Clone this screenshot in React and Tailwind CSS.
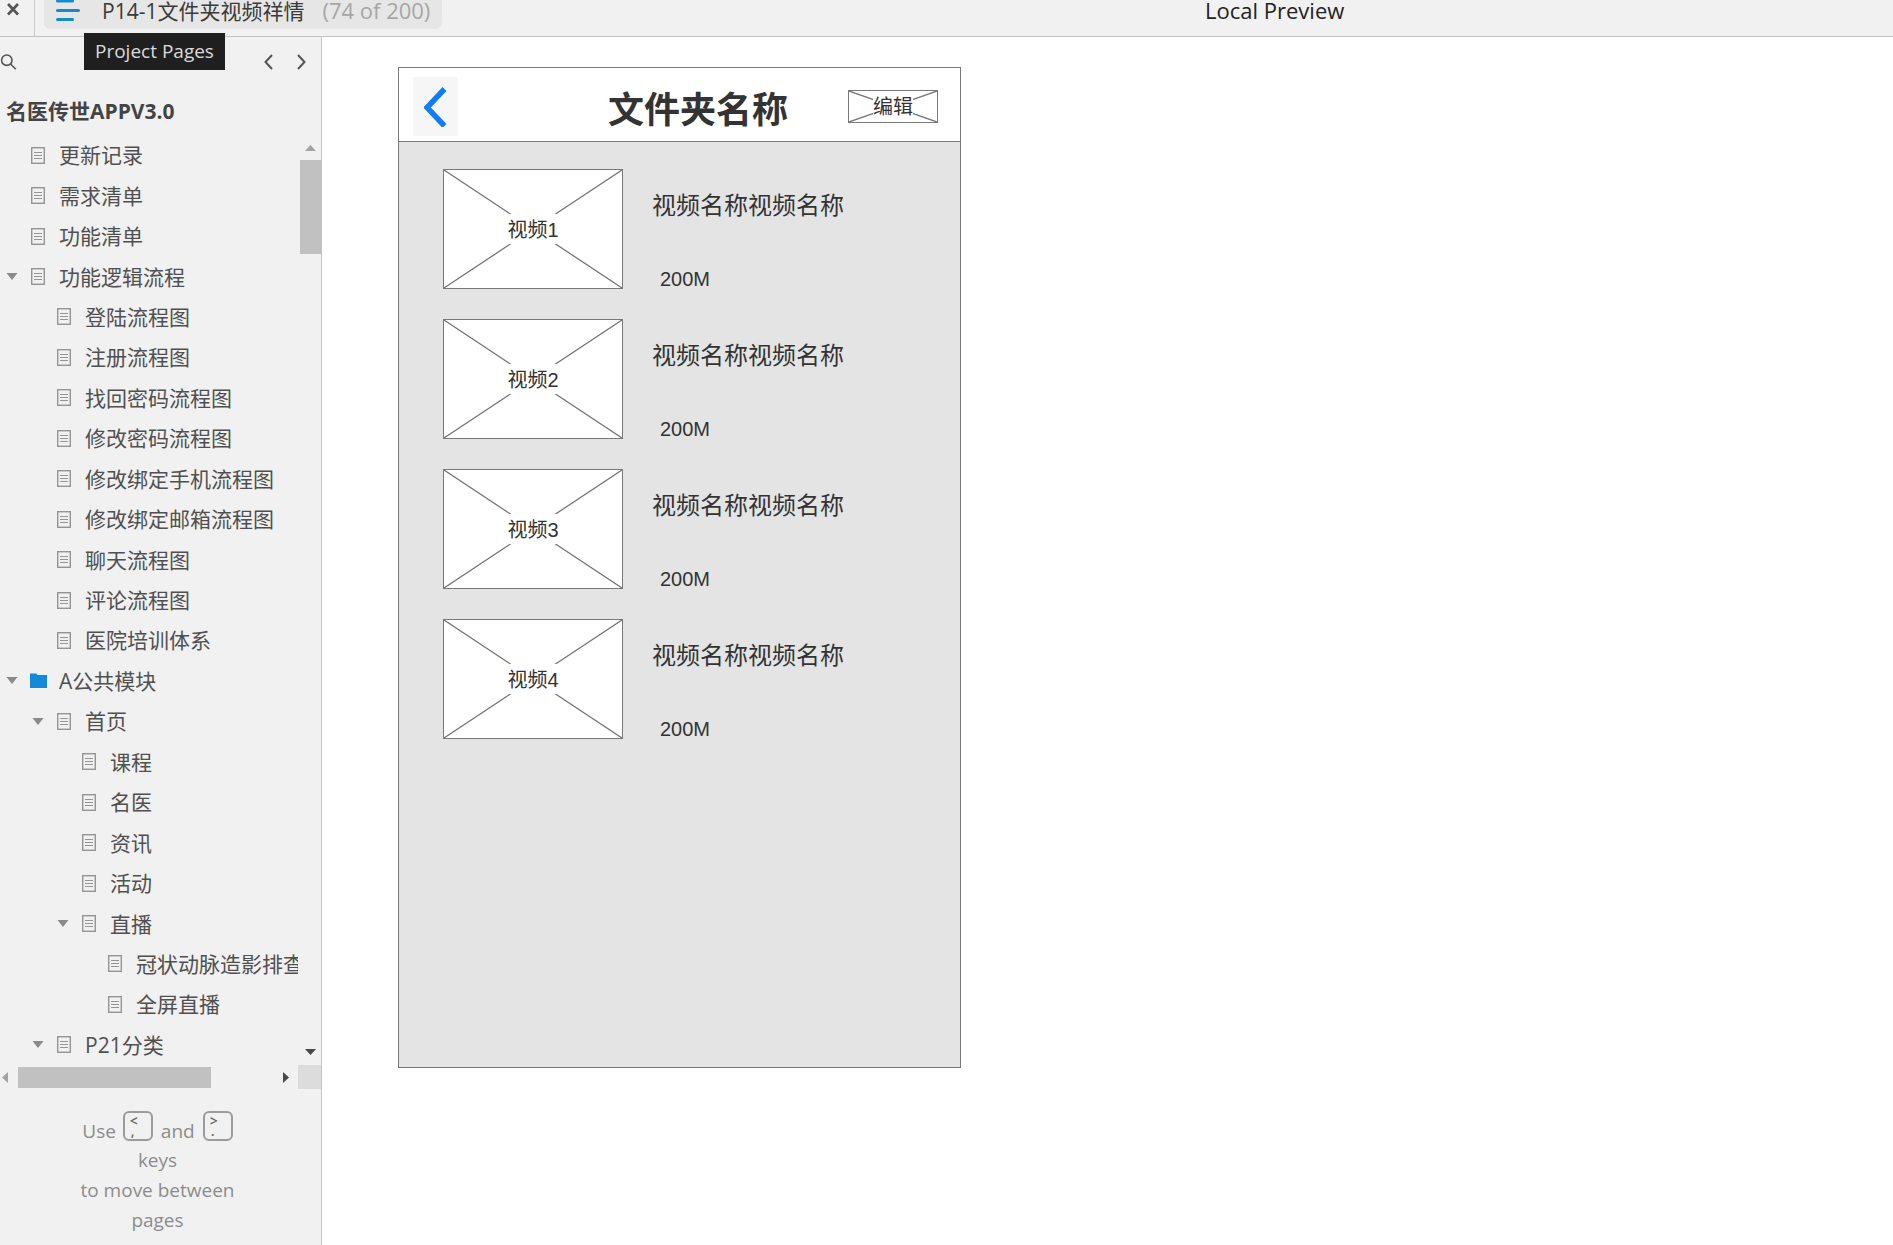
import React, { useState } from 'react';
import clsx from 'clsx';

const PAGES = [
  { name: '更新记录', level: 0 },
  { name: '需求清单', level: 0 },
  { name: '功能清单', level: 0 },
  { name: '功能逻辑流程', level: 0, open: true },
  { name: '登陆流程图', level: 1 },
  { name: '注册流程图', level: 1 },
  { name: '找回密码流程图', level: 1 },
  { name: '修改密码流程图', level: 1 },
  { name: '修改绑定手机流程图', level: 1 },
  { name: '修改绑定邮箱流程图', level: 1 },
  { name: '聊天流程图', level: 1 },
  { name: '评论流程图', level: 1 },
  { name: '医院培训体系', level: 1 },
  { name: 'A公共模块', level: 0, open: true, folder: true },
  { name: '首页', level: 1, open: true },
  { name: '课程', level: 2 },
  { name: '名医', level: 2 },
  { name: '资讯', level: 2 },
  { name: '活动', level: 2 },
  { name: '直播', level: 2, open: true },
  { name: '冠状动脉造影排查', level: 3 },
  { name: '全屏直播', level: 3 },
  { name: 'P21分类', level: 1, open: true },
];

const INDENT = ['pl-[6px]', 'pl-[32px]', 'pl-[57px]', 'pl-[83px]'];

const VIDEOS = [1, 2, 3, 4];

const PageIcon = () => (
  <svg className="w-[14px] h-[17px]" viewBox="0 0 14 17" fill="none" stroke="#959595">
    <rect x="0.7" y="0.7" width="12.6" height="15.6" strokeWidth="1.4" />
    <path d="M3 5.500h8M3 8.500h8M3 11.500h8" strokeWidth="1.2" />
  </svg>
);

const FolderIcon = () => (
  <svg className="-ml-px w-[17px] h-[15px]" viewBox="0 0 17 15" fill="#1389dc">
    <path d="M0 0.500h6.500l1 1.500H17V15H0z" />
  </svg>
);

const Cross = () => (
  <svg
    className="absolute inset-0 w-full h-full"
    viewBox="0 0 100 100"
    preserveAspectRatio="none"
    stroke="#757575"
    strokeWidth="1.3"
  >
    <path d="M0 0L100 100M100 0L0 100" vectorEffect="non-scaling-stroke" />
  </svg>
);

const Key = ({ top, bottom }) => (
  <kbd className="flex flex-col w-[30px] h-[30px] pl-[5px] rounded-md border-2 border-[#9b9b9b] text-[14px] font-semibold text-[#666] font-['Open_Sans',sans-serif]">
    <span className="pt-[2px] leading-[12px]">{top}</span>
    <span className="pl-px leading-[8px]">{bottom}</span>
  </kbd>
);

const TopBar = () => (
  <header className="flex h-[37px] items-start border-b border-[#c4c4c4] bg-[#f1f1f1] text-[21px] leading-[22px]">
    <div className="flex h-9 w-[35px] border-r border-[#c8c8c8]">
      <button aria-label="Close" className="h-[18px] pl-[7px]">
        <svg className="w-3 h-[18px]" viewBox="0 0 12 18" stroke="#555" strokeWidth="2.6">
          <path d="M1 4l10 10.500M11 4L1 14.500" />
        </svg>
      </button>
    </div>
    <div className="relative ml-[9px]">
      <button className="flex h-[29px] items-start rounded-b-md bg-[#e6e6e6] px-3">
        <svg className="w-6 h-[22px]" viewBox="0 0 24 22" stroke="#128dcb" strokeWidth="3" strokeLinecap="round">
          <path d="M1.500 1h15M1.500 10.500h21M1.500 19.500h15" />
        </svg>
        <span className="ml-[22px] text-[#3a3a3a]">P14-1文件夹视频祥情</span>
        <span className="ml-[18px] text-[22px] leading-[20px] text-[#a6a6a6]">(74 of 200)</span>
      </button>
      <div
        role="tooltip"
        className="absolute left-10 top-[33px] z-10 whitespace-nowrap bg-[#1f1f1f] px-[11px] text-[19px] leading-[37px] text-[#dadada]"
      >
        Project Pages
      </div>
    </div>
    <h1 className="flex-1 pl-[214px] text-center text-[22px] leading-[20px] text-[#222]">Local Preview</h1>
  </header>
);

const TreeRow = ({ page }) => (
  <li className={clsx('flex flex-1 items-center', INDENT[page.level])}>
    <a href="#page" className="flex items-center whitespace-nowrap">
      <span className="w-[25px]">
        {page.open && (
          <svg className="w-3 h-[7px]" viewBox="0 0 12 7" fill="#8a8a8a">
            <path d="M0.500 0h11L6 7z" />
          </svg>
        )}
      </span>
      <span className="w-7">{page.folder ? <FolderIcon /> : <PageIcon />}</span>
      {page.name}
    </a>
  </li>
);

const Sidebar = () => {
  const [pages] = useState(PAGES);

  return (
    <aside className="flex w-[322px] shrink-0 flex-col border-r border-[#c4c4c4] bg-[#f1f1f1]">
      <div className="flex h-[49px] items-center">
        <button aria-label="Search">
          <svg className="w-[17px] h-4" viewBox="0 0 17 16" fill="none" stroke="#555" strokeWidth="1.6">
            <circle cx="6.800" cy="6.200" r="5.200" />
            <path d="M10.600 10l5.200 5.300" />
          </svg>
        </button>
        <button aria-label="Previous page" className="ml-auto mr-6">
          <svg className="w-[9px] h-4" viewBox="0 0 9 16" fill="none" stroke="#555" strokeWidth="2">
            <path d="M8 1L1.500 8L8 15" />
          </svg>
        </button>
        <button aria-label="Next page" className="mr-[15px]">
          <svg className="w-[9px] h-4" viewBox="0 0 9 16" fill="none" stroke="#555" strokeWidth="2">
            <path d="M1 1l6.500 7L1 15" />
          </svg>
        </button>
      </div>
      <h2 className="h-[49px] pl-[6px] pt-[11px] text-[21px] font-bold leading-[28px] text-[#444]">名医传世APPV3.0</h2>

      <div className="flex flex-1">
        <ul className="flex w-[298px] flex-col overflow-hidden text-[21px] leading-[28px] text-[#505050]">
          {pages.map((page, i) => (
            <TreeRow key={i} page={page} />
          ))}
        </ul>
        <div className="flex flex-1 flex-col items-end">
          <svg className="mr-[5px] mt-[10px] w-[11px] h-[6px]" viewBox="0 0 11 6" fill="#a3a3a3">
            <path d="M5.500 0L11 6H0z" />
          </svg>
          <div className="mt-[9px] h-[94px] w-[21px] bg-[#c1c1c1]" />
          <svg className="mb-[10px] mr-[5px] mt-auto w-[11px] h-[6px]" viewBox="0 0 11 6" fill="#484848">
            <path d="M5.500 6L11 0H0z" />
          </svg>
        </div>
      </div>
      <div className="flex h-6 items-center">
        <svg className="ml-[2px] w-[6px] h-[11px]" viewBox="0 0 6 11" fill="#a3a3a3">
          <path d="M0 5.500L6 0v11z" />
        </svg>
        <div className="ml-[10px] h-[21px] w-[193px] bg-[#c1c1c1]" />
        <svg className="ml-auto mr-[9px] w-[6px] h-[11px]" viewBox="0 0 6 11" fill="#484848">
          <path d="M6 5.500L0 0v11z" />
        </svg>
        <div className="h-6 w-[23px] bg-[#dcdcdc]" />
      </div>

      <div className="flex h-[156px] flex-col items-center pr-[6px] pt-[22px] text-[19px] leading-[30px] text-[#8c8c8c]">
        <p className="flex h-[34px]">
          <span className="mr-[7px] pt-[5px]">Use</span>
          <Key top="<" bottom="," />
          <span className="mx-2 pt-[5px]">and</span>
          <Key top=">" bottom="." />
        </p>
        <p className="text-center">
          keys
          <br />
          to move between
          <br />
          pages
        </p>
      </div>
    </aside>
  );
};

const VideoRow = ({ index }) => (
  <li className="flex h-[150px]">
    <div className="relative flex h-[120px] w-[180px] items-center justify-center border border-[#797979] bg-white">
      <Cross />
      <span className="relative bg-white px-[2px] pt-[3px] text-[20px] leading-[27px]">视频{index}</span>
    </div>
    <div className="pl-[29px] pt-[21px]">
      <h3 className="text-[24px] leading-[32px]">视频名称视频名称</h3>
      <p className="pl-2 pt-[43px] text-[20px] leading-[28px]">200M</p>
    </div>
  </li>
);

const PhoneScreen = () => (
  <section className="flex h-[1001px] w-[563px] flex-col border border-[#797979] bg-[#e4e4e4] font-['Liberation_Sans','Noto_Sans_CJK_SC',sans-serif] text-[#333]">
    <div className="flex h-[74px] items-center border-b border-[#797979] bg-white pl-[14px] pr-[22px] pt-[3px]">
      <button aria-label="Back" className="flex h-[59px] w-[45px] items-center justify-center bg-[#f6f6f6]">
        <svg className="w-6 h-[42px]" viewBox="0 0 24 42" fill="none" stroke="#127cf0" strokeWidth="5.5">
          <path d="M20.500 4L3 22.500L20.500 41" />
        </svg>
      </button>
      <h2 className="flex-1 pl-[90px] pt-[10px] text-center text-[36px] font-bold leading-[44px]">文件夹名称</h2>
      <button className="relative flex h-[33px] w-[90px] items-center justify-center border border-[#797979] bg-white">
        <Cross />
        <span className="relative bg-white pt-[2px] text-[20px] leading-[26px]">编辑</span>
      </button>
    </div>
    <ul className="pl-11 pt-[27px]">
      {VIDEOS.map((n) => (
        <VideoRow key={n} index={n} />
      ))}
    </ul>
  </section>
);

const App = () => {
  return (
    <div className="flex min-h-screen flex-col bg-white font-['Open_Sans','Noto_Sans_CJK_SC',sans-serif]">
      <TopBar />
      <div className="flex flex-1">
        <Sidebar />
        <main className="flex-1 pl-[76px] pt-[30px]">
          <PhoneScreen />
        </main>
      </div>
    </div>
  );
};

export default App;
